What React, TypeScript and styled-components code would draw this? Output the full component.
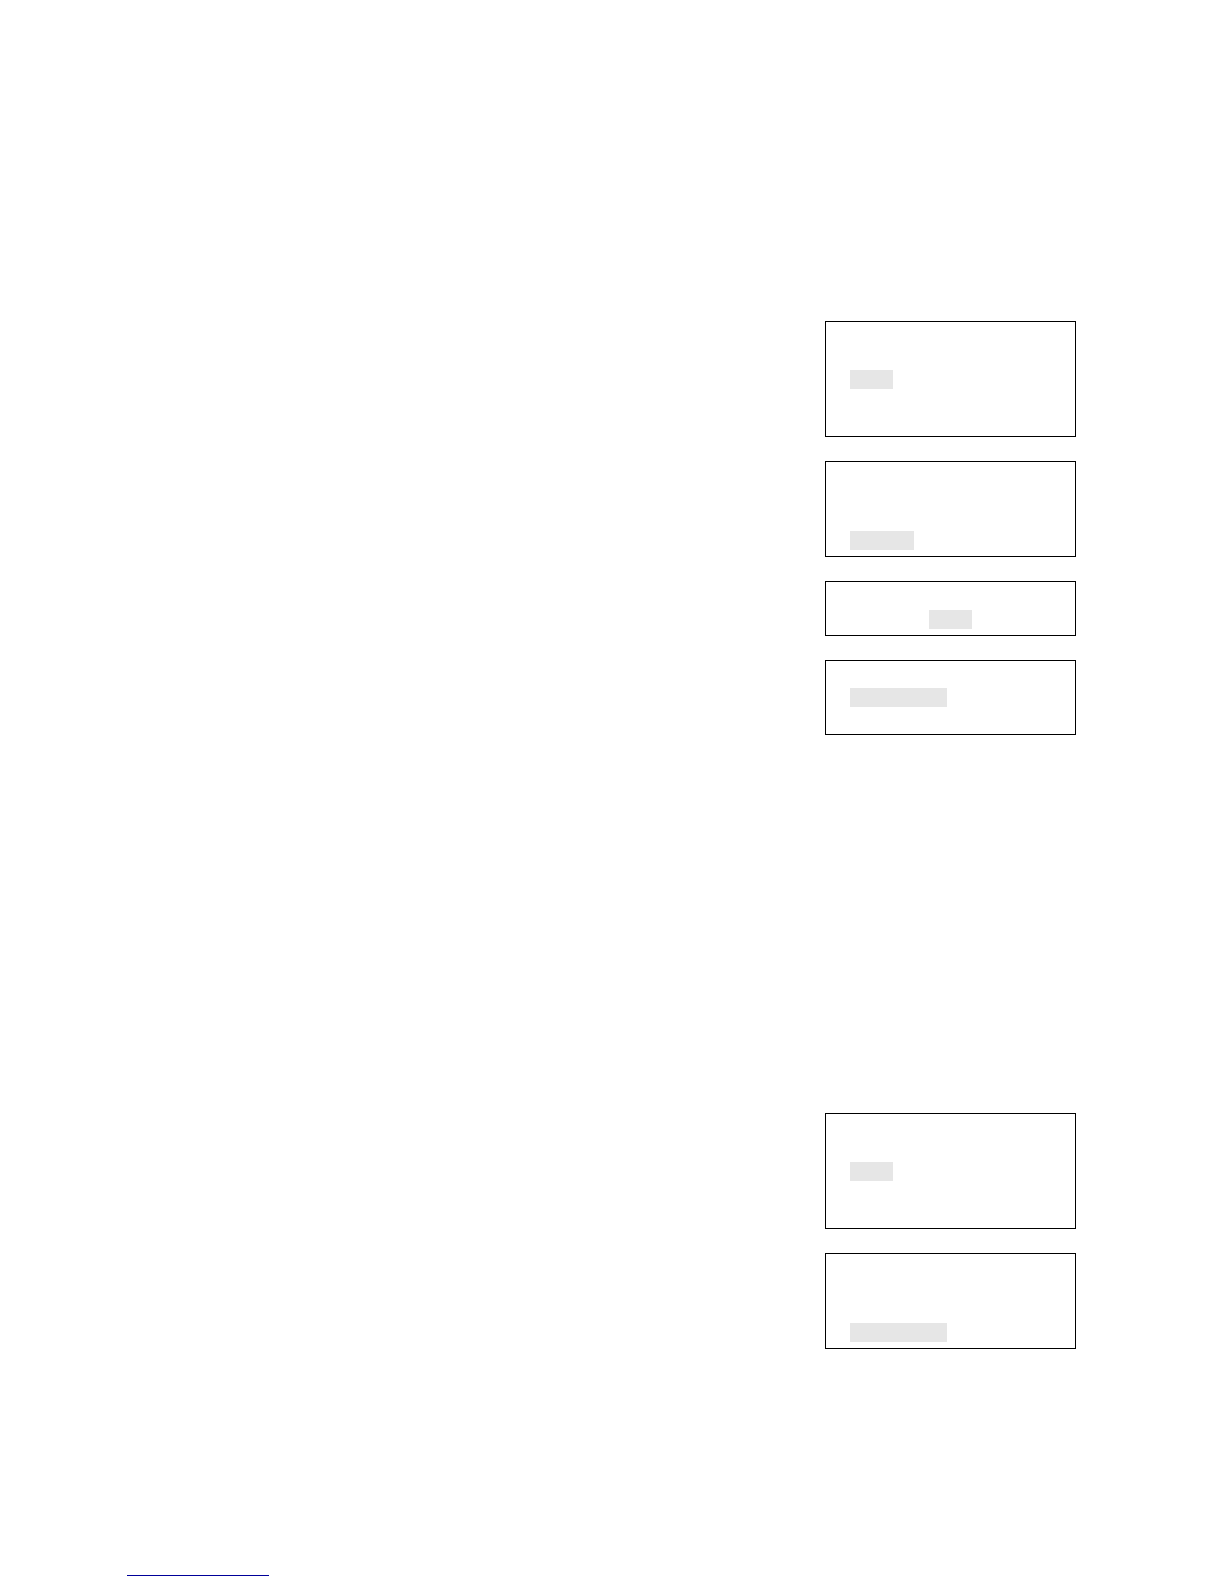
import React from "react";
import styled, { createGlobalStyle } from "styled-components";

const GlobalStyle = createGlobalStyle`
  *, *::before, *::after { box-sizing: border-box; }
  body {
    margin: 0;
    background: #fff;
    font-family: "Liberation Sans", Arial, sans-serif;
  }
`;

const Page = styled.main`
  display: flex;
  flex-direction: column;
  min-height: 100vh;
  padding: 321px 148px 8px 127px;
`;

const Groups = styled.div`
  display: flex;
  flex-direction: column;
  align-items: flex-end;
  gap: 378px;
`;

const Group = styled.section`
  display: flex;
  flex-direction: column;
  gap: 24px;
  width: 251px;
  max-width: 100%;
`;

const Frame = styled.div<{ $top: number; $bottom: number; $centered?: boolean }>`
  display: flex;
  justify-content: ${({ $centered }) => ($centered ? "center" : "flex-start")};
  padding: ${({ $top, $bottom }) => `${$top}px 24px ${$bottom}px`};
  border: 1px solid #000;
`;

const Highlight = styled.div<{ $width: number }>`
  width: ${({ $width }) => $width}px;
  height: 19px;
  background: #e6e6e6;
`;

const Footer = styled.footer`
  margin-top: auto;
`;

const Rule = styled.hr`
  width: 142px;
  height: 1px;
  margin: 0;
  border: 0;
  background: #000099;
`;

type Item = { top: number; bottom: number; mark: number; centered?: boolean };

const groups: Item[][] = [
  [
    { top: 48, bottom: 47, mark: 43 },
    { top: 69, bottom: 6, mark: 64 },
    { top: 28, bottom: 6, mark: 43, centered: true },
    { top: 27, bottom: 27, mark: 97 },
  ],
  [
    { top: 48, bottom: 47, mark: 43 },
    { top: 69, bottom: 6, mark: 97 },
  ],
];

export default function App() {
  return (
    <>
      <GlobalStyle />
      <Page>
        <Groups>
          {groups.map((items, g) => (
            <Group key={g}>
              {items.map((item, i) => (
                <Frame key={i} $top={item.top} $bottom={item.bottom} $centered={item.centered}>
                  <Highlight $width={item.mark} />
                </Frame>
              ))}
            </Group>
          ))}
        </Groups>
        <Footer>
          <Rule />
        </Footer>
      </Page>
    </>
  );
}
